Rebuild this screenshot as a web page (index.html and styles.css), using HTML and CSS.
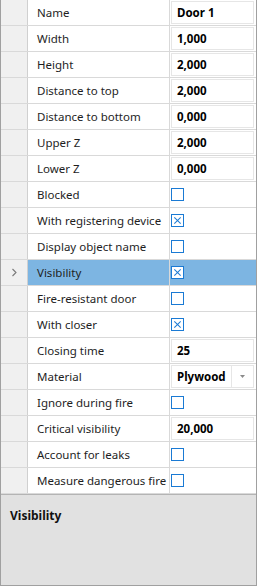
FILE: index.html
```html
<!DOCTYPE html>
<html lang="en">
  <head>
    <meta charset="UTF-8" />
    <meta name="viewport" content="width=device-width, initial-scale=1.0" />
    <title>Door properties</title>
    <link rel="stylesheet" href="styles.css">
  </head>
  <body>
    <div class="frame">
      <div class="grid">
        <div class="row">
          <div class="gutter"></div>
          <div class="label">Name</div>
          <div class="value"><div class="edit">Door 1</div></div>
        </div>
        <div class="row">
          <div class="gutter"></div>
          <div class="label">Width</div>
          <div class="value"><div class="edit">1,000</div></div>
        </div>
        <div class="row">
          <div class="gutter"></div>
          <div class="label">Height</div>
          <div class="value"><div class="edit">2,000</div></div>
        </div>
        <div class="row">
          <div class="gutter"></div>
          <div class="label">Distance to top</div>
          <div class="value"><div class="edit">2,000</div></div>
        </div>
        <div class="row">
          <div class="gutter"></div>
          <div class="label">Distance to bottom</div>
          <div class="value"><div class="edit">0,000</div></div>
        </div>
        <div class="row">
          <div class="gutter"></div>
          <div class="label">Upper Z</div>
          <div class="value"><div class="edit">2,000</div></div>
        </div>
        <div class="row">
          <div class="gutter"></div>
          <div class="label">Lower Z</div>
          <div class="value"><div class="edit">0,000</div></div>
        </div>
        <div class="row">
          <div class="gutter"></div>
          <div class="label">Blocked</div>
          <div class="value"><span class="check"></span></div>
        </div>
        <div class="row">
          <div class="gutter"></div>
          <div class="label">With registering device</div>
          <div class="value"><span class="check on"></span></div>
        </div>
        <div class="row">
          <div class="gutter"></div>
          <div class="label">Display object name</div>
          <div class="value"><span class="check"></span></div>
        </div>
        <div class="row selected">
          <div class="gutter">
            <svg width="7" height="9" viewBox="0 0 7 9"><path d="M1.5 1 L5 4.5 L1.5 8" fill="none" stroke="#7a7a7a" stroke-width="1.1"/></svg>
          </div>
          <div class="label">Visibility</div>
          <div class="value"><span class="check on"></span></div>
        </div>
        <div class="row">
          <div class="gutter"></div>
          <div class="label">Fire-resistant door</div>
          <div class="value"><span class="check"></span></div>
        </div>
        <div class="row">
          <div class="gutter"></div>
          <div class="label">With closer</div>
          <div class="value"><span class="check on"></span></div>
        </div>
        <div class="row">
          <div class="gutter"></div>
          <div class="label">Closing time</div>
          <div class="value"><div class="edit">25</div></div>
        </div>
        <div class="row">
          <div class="gutter"></div>
          <div class="label">Material</div>
          <div class="value">
            <div class="edit combo">
              <span class="combo-text">Plywood</span>
              <span class="combo-btn"><svg width="5" height="3" viewBox="0 0 5 3"><path d="M0 0 H5 L2.5 3 Z" fill="#8a8a8a"/></svg></span>
            </div>
          </div>
        </div>
        <div class="row">
          <div class="gutter"></div>
          <div class="label">Ignore during fire</div>
          <div class="value"><span class="check"></span></div>
        </div>
        <div class="row">
          <div class="gutter"></div>
          <div class="label">Critical visibility</div>
          <div class="value"><div class="edit">20,000</div></div>
        </div>
        <div class="row">
          <div class="gutter"></div>
          <div class="label">Account for leaks</div>
          <div class="value"><span class="check"></span></div>
        </div>
        <div class="row">
          <div class="gutter"></div>
          <div class="label">Measure dangerous fire factors</div>
          <div class="value"><span class="check"></span></div>
        </div>
      </div>
      <div class="desc">
        <div class="desc-title">Visibility</div>
      </div>
    </div>
  </body>
</html>
```
FILE: styles.css
```css
body {
  margin: 0;
  background: #ffffff;
  font-family: "Noto Sans", "Open Sans", sans-serif;
  font-size: 11.5px;
  color: #1e1e1e;
}
.frame {
  width: 255px;
  height: 585px;
  border: 1px solid #a0a0a0;
  border-top: none;
  display: flex;
  flex-direction: column;
}
.grid {
  background: #ffffff;
}
.row {
  display: flex;
  height: 25px;
  border-bottom: 1px solid #d9d9d9;
}
.gutter {
  width: 26px;
  flex: none;
  background: #f0f0f0;
  border-right: 1px solid #d0d0d0;
  display: flex;
  align-items: center;
  justify-content: center;
}
.label {
  width: 132px;
  flex: none;
  padding-left: 9px;
  border-right: 1px solid #d9d9d9;
  line-height: 26px;
  white-space: nowrap;
  overflow: hidden;
}
.value {
  flex: 1;
  display: flex;
  align-items: center;
  padding: 0 2px 0 1px;
}
.edit {
  flex: 1;
  height: 21px;
  border: 1px solid #e6e6e6;
  font-weight: bold;
  color: #000000;
  line-height: 22px;
  padding-left: 5px;
}
.combo {
  display: flex;
  padding-left: 0;
}
.combo-text {
  flex: 1;
  padding-left: 5px;
}
.combo-btn {
  width: 21px;
  border-left: 1px solid #e6e6e6;
  display: flex;
  align-items: center;
  justify-content: center;
}
.check {
  width: 11px;
  height: 11px;
  border: 1px solid #1a7ad4;
  background: #ffffff;
  position: relative;
}
.check.on::before,
.check.on::after {
  content: "";
  position: absolute;
  left: 5px;
  top: 1px;
  width: 1px;
  height: 9px;
  background: #1a7ad4;
  transform: rotate(45deg);
}
.check.on::after {
  transform: rotate(-45deg);
}
.selected .label,
.selected .value {
  background: #7db5e2;
}
.desc {
  flex: 1;
  background: #e1e1e1;
  border-top: 1px solid #b4b4b4;
  padding: 12px 9px;
}
.desc-title {
  font-weight: bold;
  font-size: 12px;
  color: #111111;
}
```
